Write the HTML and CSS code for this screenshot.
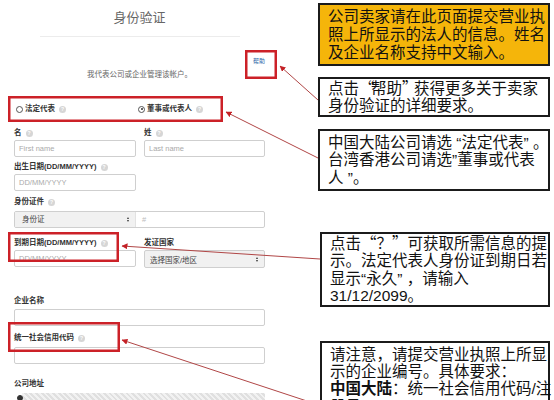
FILE: index.html
```html
<!DOCTYPE html>
<html lang="zh-CN">
<head>
<meta charset="utf-8">
<title>身份验证</title>
<link rel="stylesheet" href="styles.css">
</head>
<body>
<div class="page">
  <div class="form">
    <div class="title">身份验证</div>
    <div class="sep"></div>
    <div class="help"><span class="help-link">帮助</span></div>
    <div class="intro">我代表公司或企业管理该帐户。</div>
    <div class="radios">
      <div class="radio"><span class="rb"></span>法定代表<span class="q">?</span></div>
      <div class="radio"><span class="rb on"></span>董事或代表人<span class="q">?</span></div>
    </div>

    <div class="row g-name">
      <div class="field"><div class="lbl">名<span class="q">?</span></div><div class="inp">First name</div></div>
      <div class="field"><div class="lbl">姓<span class="q">?</span></div><div class="inp">Last name</div></div>
    </div>

    <div class="group g-birth">
      <div class="lbl">出生日期(DD/MM/YYYY)<span class="q">?</span></div>
      <div class="inp half">DD/MM/YYYY</div>
    </div>

    <div class="group g-id">
      <div class="lbl">身份证件<span class="q">?</span></div>
      <div class="combo">
        <div class="combo-sel"><span>身份证</span><span class="arrows"><i class="up"></i><i class="down"></i></span></div>
        <div class="combo-num">#</div>
      </div>
    </div>

    <div class="row g-exp">
      <div class="field"><div class="lbl">到期日期(DD/MM/YYYY)<span class="q">?</span></div><div class="inp">DD/MM/YYYY</div></div>
      <div class="field"><div class="lbl">发证国家</div><div class="sel"><span>选择国家/地区</span><span class="arrows"><i class="up"></i><i class="down"></i></span></div></div>
    </div>

    <div class="group g-company">
      <div class="lbl">企业名称</div>
      <div class="inp"></div>
    </div>

    <div class="group g-code">
      <div class="lbl">统一社会信用代码<span class="q">?</span></div>
      <div class="inp"></div>
    </div>

    <div class="group g-addr">
      <div class="lbl">公司地址</div>
      <div class="addr"><span class="rb on small"></span><div class="hatch"></div></div>
    </div>
  </div>

  <div class="notes">
    <div class="note n1">公司卖家请在此页面提交营业执<br>照上所显示的法人的信息。姓名<br>及企业名称支持中文输入。</div>
    <div class="note n2">点击<span class="fw tight">“</span>帮助<span class="fw tight">”</span>获得更多关于卖家<br>身份验证的详细要求。</div>
    <div class="note n3">中国大陆公司请选 “法定代表” 。<br>台湾香港公司请选”董事或代表<br>人 ”。</div>
    <div class="note n4">点击<span class="fw">“</span>？<span class="fw">”</span>可获取所需信息的提<br>示。法定代表人身份证到期日若<br>显示“永久” ，请输入<br>31/12/2099。</div>
    <div class="note n5">请注意，请提交营业执照上所显<br>示的企业编号。具体要求：<br><b>中国大陆</b>：统一社会信用代码/注<br>册号</div>
  </div>
</div>

<svg class="overlay" width="554" height="400" viewBox="0 0 554 400" xmlns="http://www.w3.org/2000/svg">
  <defs>
    <marker id="ah" viewBox="0 0 6 6" refX="5.5" refY="3" markerWidth="6" markerHeight="6" markerUnits="userSpaceOnUse" orient="auto">
      <path d="M0,0 L6,3 L0,6 z" fill="#c42126"/>
    </marker>
  </defs>
  <g fill="none" stroke="#cc2128" stroke-width="2.5">
    <rect x="9.25" y="97.25" width="212.5" height="23.5"/>
    <rect x="246.25" y="51.25" width="29.5" height="26.5"/>
    <rect x="9.25" y="233.25" width="108.5" height="27.5"/>
    <rect x="9.25" y="323.25" width="109.5" height="27.5"/>
  </g>
  <g stroke="#b04646" stroke-width="1" marker-end="url(#ah)">
    <line x1="318" y1="100" x2="280" y2="66"/>
    <line x1="318" y1="158" x2="226" y2="112"/>
    <line x1="320" y1="259" x2="122" y2="246"/>
    <line x1="322" y1="406" x2="122" y2="340"/>
  </g>
</svg>
</body>
</html>
```

FILE: styles.css
```css
* {
  box-sizing: border-box;
  margin: 0;
  padding: 0;
}

html, body {
  width: 554px;
  height: 400px;
  overflow: hidden;
  background: #fff;
}

body {
  position: relative;
  font-family: "Liberation Sans", "Noto Sans CJK SC", sans-serif;
  color: #333;
}

.page {
  display: flex;
  align-items: flex-start;
}

/* ---------- left form ---------- */
.form {
  width: 251px;
  margin-left: 14px;
  flex: 0 0 251px;
}

.title {
  margin-top: 9px;
  font-family: "Noto Sans CJK SC", sans-serif;
  font-size: 13px;
  line-height: 15px;
  text-align: center;
  color: #666;
}

.sep {
  margin: 12px 0 0 26px;
  width: 200px;
  height: 1px;
  background: #ececec;
}

.help {
  margin-top: 20px;
  text-align: right;
  font-size: 6px;
  line-height: 8px;
}

.help-link {
  color: #2d67a8;
}

.intro {
  margin-top: 4.5px;
  font-size: 7.5px;
  line-height: 9px;
  text-align: center;
  color: #666;
}

.radios {
  margin-top: 25.5px;
  padding-left: 2px;
  display: flex;
  height: 10px;
  font-size: 7.5px;
  line-height: 10px;
  font-weight: bold;
  color: #333;
}

.radio {
  display: flex;
  align-items: center;
}

.radio:first-child {
  width: 122px;
}

.rb {
  position: relative;
  display: inline-block;
  width: 7px;
  height: 7px;
  border: 1px solid #555;
  border-radius: 50%;
  margin-right: 2px;
  background: #fff;
}

.rb.on::after {
  content: "";
  position: absolute;
  left: 1.5px;
  top: 1.5px;
  width: 2px;
  height: 2px;
  border-radius: 50%;
  background: #333;
}

.q {
  display: inline-flex;
  align-items: center;
  justify-content: center;
  width: 7px;
  height: 7px;
  margin-left: 4px;
  border-radius: 50%;
  background: #d6d6d6;
  color: #fff;
  font-size: 5px;
  line-height: 7px;
  font-weight: bold;
}

.row {
  display: flex;
  gap: 8px;
}

.row .field:first-child {
  flex: 0 0 122px;
}

.row .field:last-child {
  flex: 1;
}

.lbl {
  display: flex;
  align-items: center;
  height: 10px;
  margin-bottom: 2px;
  font-size: 7.5px;
  line-height: 10px;
  font-weight: bold;
  color: #333;
  white-space: nowrap;
}

.inp {
  height: 17px;
  border: 1px solid #cfcfcf;
  border-radius: 2px;
  padding-left: 4px;
  font-size: 7.5px;
  line-height: 15px;
  color: #aaa;
  background: #fff;
}

.inp.half {
  width: 122px;
}

.g-name { margin-top: 14px; }
.g-birth { margin-top: 5px; }
.g-id { margin-top: 6px; }
.g-id .lbl { margin-bottom: 4px; }
.g-exp { margin-top: 10px; }
.g-company { margin-top: 28px; }
.g-company .lbl { margin-bottom: 3px; }
.g-code { margin-top: 7px; }
.g-code .lbl { margin-bottom: 4px; }
.g-addr { margin-top: 15px; }

.combo {
  display: flex;
  height: 17px;
  border: 1px solid #cfcfcf;
  border-radius: 2px;
  font-size: 7.5px;
  line-height: 15px;
  overflow: hidden;
}

.combo-sel {
  flex: 0 0 121px;
  display: flex;
  justify-content: space-between;
  align-items: center;
  padding: 0 6px 0 7px;
  background: #f1f1f1;
  border-right: 1px solid #e2e2e2;
  color: #444;
}

.combo-num {
  flex: 1;
  padding-left: 6px;
  color: #bbb;
}

.sel {
  display: flex;
  justify-content: space-between;
  align-items: center;
  height: 18px;
  padding: 0 6px 0 5px;
  border: 1px solid #cfcfcf;
  border-radius: 2px;
  background: #f1f1f1;
  font-size: 7.5px;
  color: #444;
}

.arrows {
  display: flex;
  flex-direction: column;
  gap: 1px;
}

.arrows i {
  display: block;
  width: 0;
  height: 0;
  border-left: 1.5px solid transparent;
  border-right: 1.5px solid transparent;
}

.arrows .up {
  border-bottom: 2px solid #333;
}

.arrows .down {
  border-top: 2px solid #333;
}

.addr {
  display: flex;
  align-items: flex-start;
  margin-top: 4px;
  height: 10px;
}

.rb.small {
  width: 6px;
  height: 6px;
  margin: 2px 0 0 3px;
  background: #333;
  border-color: #333;
}

.hatch {
  flex: 1;
  height: 10px;
  margin-left: -1px;
  background: repeating-linear-gradient(45deg, #e0e0e0 0 2px, #f2f2f2 2px 4px);
}

/* ---------- right notes ---------- */
.notes {
  margin-left: 53px;
  width: 232px;
  flex: 0 0 232px;
  font-family: "Liberation Sans", "Noto Sans CJK SC", sans-serif;
  font-size: 15.5px;
  color: #111;
}

.note {
  border: 2px solid #1b1b1b;
  padding: 0 2px 0 8px;
  white-space: nowrap;
  background: #fff;
  line-height: 17.4px;
}

.note b {
  font-weight: bold;
}

.fw {
  font-family: "Noto Sans CJK SC", sans-serif;
}

.fw.tight {
  letter-spacing: -3.5px;
}

.n1 {
  margin-top: 3px;
  background: #f5b50a;
  line-height: 18px;
  padding-top: 3px;
  padding-bottom: 2px;
}

.n2 {
  margin-top: 11px;
}

.n3 {
  margin-top: 12px;
  padding-top: 3px;
  padding-bottom: 3px;
}

.n4 {
  margin-top: 41px;
  margin-left: 2px;
  width: 230px;
}

.n5 {
  margin-top: 34px;
  margin-left: 2px;
  width: 230px;
  padding-top: 3px;
}

/* ---------- annotations overlay ---------- */
.overlay {
  position: absolute;
  left: 0;
  top: 0;
  pointer-events: none;
}
```
